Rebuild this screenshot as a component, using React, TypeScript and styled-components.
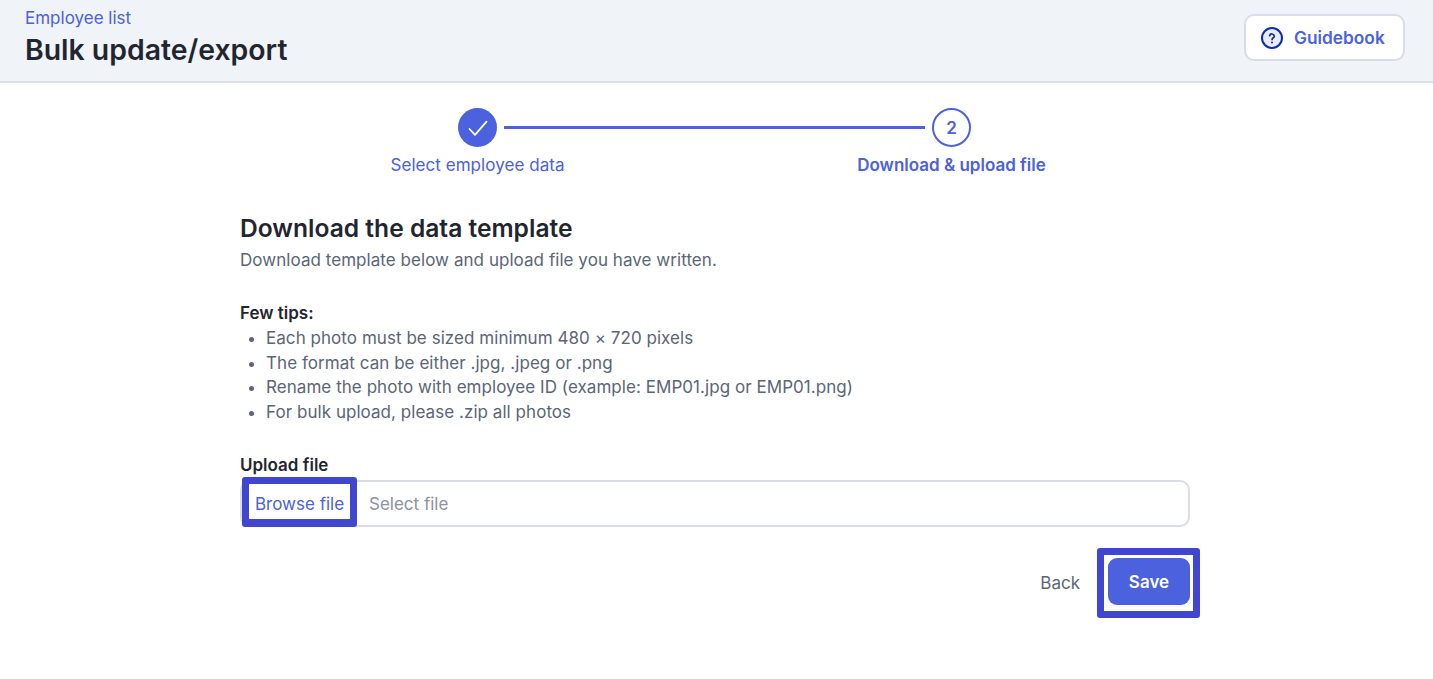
import React from "react";
import styled, { createGlobalStyle } from "styled-components";

const GlobalStyle = createGlobalStyle`
  html, body {
    margin: 0;
    padding: 0;
    background: #fff;
    font-family: Inter, "Liberation Sans", sans-serif;
  }
`;

const tips = [
  "Each photo must be sized minimum 480 × 720 pixels",
  "The format can be either .jpg, .jpeg or .png",
  "Rename the photo with employee ID (example: EMP01.jpg or EMP01.png)",
  "For bulk upload, please .zip all photos",
];

const App: React.FC = () => {
  return (
    <Page>
      <GlobalStyle />
      <Header>
        <div>
          <Crumb>Employee list</Crumb>
          <Title>Bulk update/export</Title>
        </div>
        <GuideButton>
          <svg width="24" height="24" viewBox="0 0 24 24" fill="none">
            <circle cx="12" cy="12" r="10" fill="#e8ebfa" stroke="#0b2fb0" strokeWidth="2" />
            <path
              d="M9.6 9.7a2.4 2.4 0 0 1 4.7.5c0 1.5-2.2 1.9-2.2 3.2"
              stroke="#1b2a6b"
              strokeWidth="1.7"
              strokeLinecap="round"
            />
            <circle cx="12" cy="16.6" r="1" fill="#1b2a6b" />
          </svg>
          Guidebook
        </GuideButton>
      </Header>

      <Content>
        <Stepper>
          <DoneCircle>
            <svg width="22" height="22" viewBox="0 0 22 22" fill="none">
              <path
                d="M2.5 12L8 17.8L19.5 4.7"
                stroke="#fff"
                strokeWidth="1.8"
                strokeLinecap="round"
                strokeLinejoin="round"
              />
            </svg>
          </DoneCircle>
          <Connector />
          <ActiveCircle>2</ActiveCircle>
          <StepLabel>Select employee data</StepLabel>
          <span />
          <StepLabel $active>Download &amp; upload file</StepLabel>
        </Stepper>

        <Heading>Download the data template</Heading>
        <Subtitle>Download template below and upload file you have written.</Subtitle>

        <TipsTitle>Few tips:</TipsTitle>
        <TipList>
          {tips.map((tip) => (
            <li key={tip}>{tip}</li>
          ))}
        </TipList>

        <FieldLabel>Upload file</FieldLabel>
        <FileField>
          <BrowseButton>Browse file</BrowseButton>
          <Placeholder>Select file</Placeholder>
        </FileField>

        <Actions>
          <BackLink>Back</BackLink>
          <SaveFrame>
            <SaveButton>Save</SaveButton>
          </SaveFrame>
        </Actions>
      </Content>
    </Page>
  );
};

export default App;

const Page = styled.div`
  min-height: 679px;
  background: #fff;
`;

const Header = styled.header`
  box-sizing: border-box;
  height: 83px;
  display: flex;
  justify-content: space-between;
  align-items: flex-start;
  padding: 8px 28px 0 25px;
  background: #f0f3f8;
  border-bottom: 2px solid #dde1ea;
`;

const Crumb = styled.div`
  font-size: 17px;
  line-height: 21px;
  color: #4b61dd;
`;

const Title = styled.h1`
  margin: 3px 0 0;
  font-size: 28.4px;
  line-height: 36px;
  font-weight: 600;
  color: #1f2630;
`;

const GuideButton = styled.button`
  box-sizing: border-box;
  width: 161px;
  height: 47px;
  margin-top: 6px;
  display: flex;
  align-items: center;
  gap: 10px;
  padding: 0 0 0 14px;
  background: #fff;
  border: 2px solid #d9dde6;
  border-radius: 10px;
  font-family: inherit;
  font-size: 17.3px;
  font-weight: 600;
  color: #4b61dd;
`;

const Content = styled.main`
  width: 950px;
  margin-left: 240px;
  padding-top: 25px;
`;

const Stepper = styled.div`
  width: 513px;
  margin-left: 218px;
  display: grid;
  grid-template-columns: 39px 1fr 39px;
  grid-template-rows: 39px auto;
  row-gap: 8px;
  align-items: center;
`;

const DoneCircle = styled.div`
  width: 39px;
  height: 39px;
  border-radius: 50%;
  background: #4b61dd;
  display: flex;
  align-items: center;
  justify-content: center;
`;

const ActiveCircle = styled.div`
  box-sizing: border-box;
  width: 39px;
  height: 39px;
  border-radius: 50%;
  border: 2.5px solid #4b61dd;
  display: flex;
  align-items: center;
  justify-content: center;
  font-size: 17px;
  font-weight: 600;
  color: #4b61dd;
`;

const Connector = styled.div`
  height: 3px;
  margin: 0 7px;
  background: #4b61dd;
`;

const StepLabel = styled.div<{ $active?: boolean }>`
  justify-self: center;
  white-space: nowrap;
  font-size: 17px;
  letter-spacing: ${(p) => (p.$active ? 0 : "0.05px")};
  line-height: 20px;
  font-weight: ${(p) => (p.$active ? 600 : 400)};
  color: #4b61dd;
`;

const Heading = styled.h2`
  margin: 37px 0 0;
  font-size: 24.6px;
  line-height: 32px;
  font-weight: 600;
  color: #1f2630;
`;

const Subtitle = styled.p`
  margin: 4px 0 0;
  font-size: 17px;
  letter-spacing: 0.05px;
  line-height: 24px;
  color: #5b6577;
`;

const TipsTitle = styled.div`
  margin-top: 29px;
  font-size: 17px;
  line-height: 24px;
  font-weight: 600;
  color: #1f2630;
`;

const TipList = styled.ul`
  margin: 1px 0 0;
  padding: 0 0 0 26px;
  font-size: 17px;
  letter-spacing: 0.05px;
  line-height: 24.5px;
  color: #5b6577;
`;

const FieldLabel = styled.div`
  margin-top: 29px;
  font-size: 17px;
  line-height: 24px;
  font-weight: 600;
  color: #1f2630;
`;

const FileField = styled.div`
  box-sizing: border-box;
  height: 47px;
  margin-top: 3px;
  display: flex;
  align-items: center;
  background: #fff;
  border: 2px solid #dadde5;
  border-radius: 10px;
`;

const BrowseButton = styled.button`
  box-sizing: border-box;
  width: 115px;
  height: 50px;
  margin: 0 0 -2px 0;
  padding: 5px 0 0;
  flex: none;
  align-self: flex-end;
  background: #fff;
  border-style: solid;
  border-color: #4146d0;
  border-width: 7px 7px 8px;
  border-radius: 3px;
  font-family: inherit;
  font-size: 17px;
  color: #4b61dd;
`;

const Placeholder = styled.span`
  margin-left: 12px;
  font-size: 17px;
  color: #8b92a1;
`;

const Actions = styled.div`
  display: flex;
  justify-content: flex-end;
  align-items: center;
  gap: 17px;
  margin: 21px -10px 0 0;
`;

const BackLink = styled.span`
  font-size: 17px;
  color: #5b6577;
`;

const SaveFrame = styled.div`
  box-sizing: border-box;
  width: 103px;
  height: 70px;
  padding: 3px 3px 6px 4px;
  display: flex;
  background: #fff;
  border: 7px solid #4146d0;
  border-radius: 3px;
`;

const SaveButton = styled.button`
  flex: 1;
  border: 0;
  border-radius: 9px;
  background: #4b61dd;
  font-family: inherit;
  font-size: 17px;
  font-weight: 600;
  color: #fff;
`;
